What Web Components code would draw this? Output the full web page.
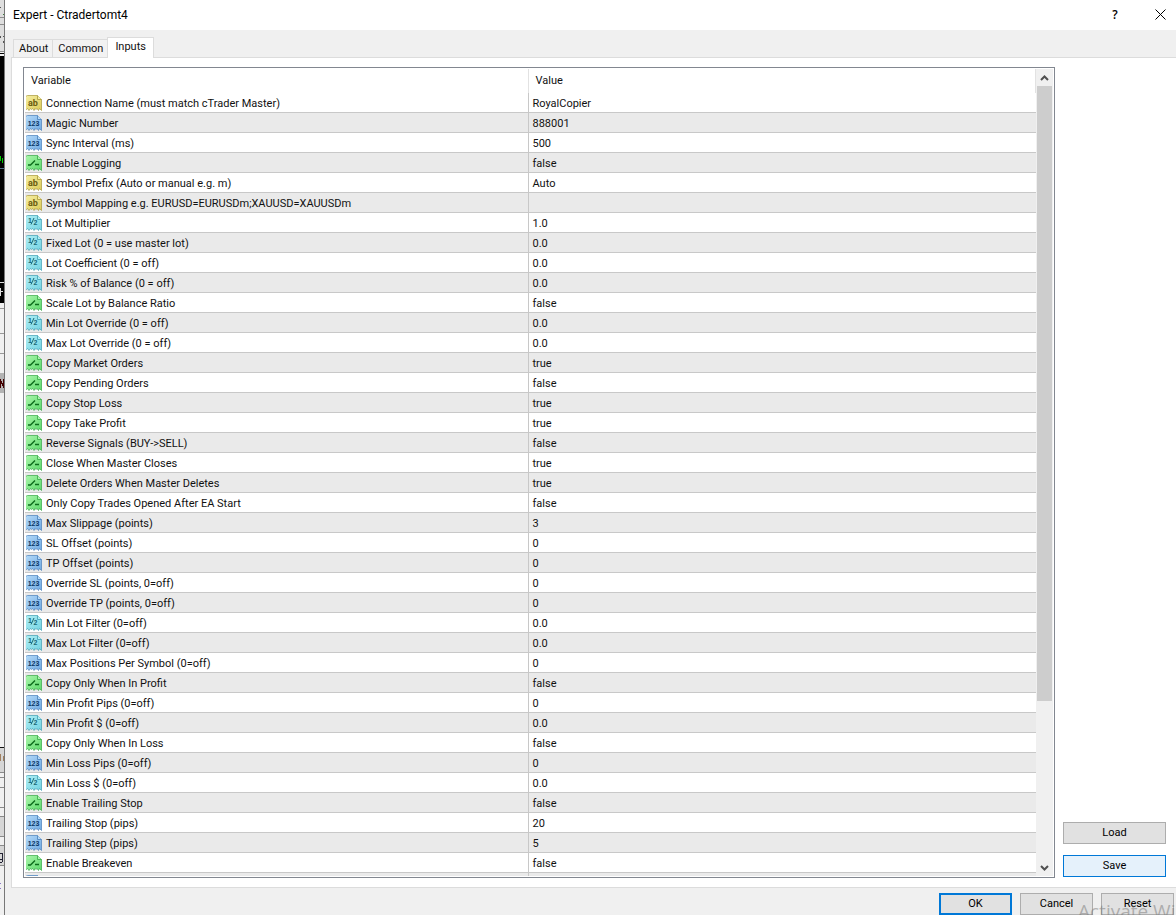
<!DOCTYPE html>
<html lang="en">
<head>
<meta charset="utf-8">
<title>Expert - Ctradertomt4</title>
<style>
body {
  margin: 0;
  height: 100vh;
  overflow: hidden;
  display: flex;
  background: #f0f0f0;
  color: #111;
  font: 11px/20px Roboto, "Liberation Sans", sans-serif;
}
</style>
</head>
<body>
<desktop-edge></desktop-edge>
<expert-dialog heading="Expert - Ctradertomt4">
  <dialog-tab slot="tabs">About</dialog-tab>
  <dialog-tab slot="tabs">Common</dialog-tab>
  <dialog-tab slot="tabs" selected>Inputs</dialog-tab>
  <inputs-list></inputs-list>
  <push-button slot="side">Load</push-button>
  <push-button slot="side" kind="hot">Save</push-button>
  <push-button slot="footer" kind="default">OK</push-button>
  <push-button slot="footer">Cancel</push-button>
  <push-button slot="footer">Reset</push-button>
</expert-dialog>
<activation-note>Activate Wi</activation-note>

<script>
function attach(element, html) {
  const template = document.createElement("template");
  template.innerHTML = html;
  element.attachShadow({ mode: "open" }).appendChild(template.content.cloneNode(true));
}

// The sliver of the terminal window left of the dialog
class DesktopEdge extends HTMLElement {
  connectedCallback() {
    attach(this, `
<style>
:host {
  flex: none;
  width: 4px;
  overflow: hidden;
  background: #f0f0f0;
  border-right: 1px solid #777;
}
svg { display: block; }
</style>
<svg width="4" height="915" aria-hidden="true">
  <path fill="#dedede" d="M0 0h4v52H0z"/>
  <path fill="#8d8d8d" d="M0 17h4v1H0zM0 24h4v1H0zM0 51h4v1H0z"/>
  <path fill="#555" d="M0 7h1v1H0zM0 36h1v2H0zM3 36h1v1H3zM3 41h1v2H3z"/>
  <path fill="#3c7a3c" d="M3 14h1v1H3z"/>
  <path fill="#000" d="M0 53h4v1H0zM0 56h4v247H0z"/>
  <path fill="#0c0" d="M0 156h1v5H0zM2 158h1v5H2z"/>
  <path fill="#51708a" d="M0 168h4v1H0z"/>
  <path fill="#ddd" d="M0 282h4v1H0zM0 288h1v8H0zM0 291h3v1H0z"/>
  <path fill="#999" d="M0 308h4v1H0zM0 333h4v1H0zM0 353h4v1H0z"/>
  <path fill="#b4b4b4" d="M0 373h4v20H0z"/>
  <path fill="#400" d="M0 379h1v9H0zM1 381h1v3H1zM2 383h1v3H2zM3 379h1v9H3z"/>
  <path fill="#111" d="M0 747h4v1H0z"/>
  <path fill="#d6d6d6" d="M0 748h4v24H0zM0 816h4v21H0zM0 845h4v20H0z"/>
  <path fill="#a08060" d="M0 754h1v7H0zM3 756h1v5H3z"/>
  <path fill="#8a8a8a" d="M0 772h4v1H0zM0 777h4v1H0zM0 787h4v1H0zM0 807h4v1H0zM0 816h4v1H0zM0 836h4v1H0zM0 845h4v1H0zM0 865h4v1H0z"/>
  <path fill="#223" d="M2 853h1v9H2zM0 853h2v1H0zM0 859h2v1H0zM0 862h2v1H0z"/>
  <path fill="#8a78c8" d="M0 883h1v1H0zM0 888h1v1H0z"/>
</svg>`);
  }
}
customElements.define("desktop-edge", DesktopEdge);

class ExpertDialog extends HTMLElement {
  connectedCallback() {
    attach(this, `
<style>
:host {
  flex: 1;
  min-width: 0;
  display: flex;
  flex-direction: column;
}
header {
  display: flex;
  align-items: center;
  height: 29px;
  padding: 0 8px 1px;
  background: #fff;
}
h1 {
  flex: 1;
  margin: 0;
  font: 12px/20px Roboto, "Open Sans", sans-serif;
  color: #000;
}
header button {
  display: grid;
  place-items: center;
  width: 16px;
  height: 20px;
  margin-left: 29px;
  padding: 0;
  border: 0;
  background: none;
  font: 600 12px/20px "Open Sans", sans-serif;
  color: #000;
}
nav {
  display: flex;
  align-items: flex-end;
  height: 28px;
  padding-left: 8px;
}
main {
  flex: 1;
  min-height: 0;
  display: flex;
  gap: 8px;
  margin-left: 6px;
  margin-top: -1px;
  padding: 9px 10px 9px 11px;
  border: 1px solid #dcdcdc;
  border-right: 0;
  background: #fff;
}
aside {
  display: flex;
  flex-direction: column;
  justify-content: flex-end;
  gap: 11px;
  width: 103px;
  padding-bottom: 1px;
}
footer {
  display: flex;
  justify-content: flex-end;
  gap: 8px;
  padding: 5px 2px 0 0;
}
footer ::slotted(*) { width: 73px; }
</style>
<header>
  <h1></h1>
  <button aria-label="Help">?</button>
  <button aria-label="Close">
    <svg width="11" height="11" viewBox="0 0 11 11"><path d="M.5.5l10 10M10.5.5l-10 10" stroke="#000"/></svg>
  </button>
</header>
<nav><slot name="tabs"></slot></nav>
<main>
  <slot></slot>
  <aside><slot name="side"></slot></aside>
</main>
<footer><slot name="footer"></slot></footer>`);
    this.shadowRoot.querySelector("h1").textContent = this.getAttribute("heading");
  }
}
customElements.define("expert-dialog", ExpertDialog);

class DialogTab extends HTMLElement {
  connectedCallback() {
    attach(this, `
<style>
:host { display: block; }
button {
  display: block;
  height: 19px;
  padding: 0 4px 0 5px;
  border: 1px solid #dcdcdc;
  border-right: 0;
  background: #f2f2f2;
  font: inherit;
  line-height: 18px;
  color: inherit;
}
:host([selected]) { position: relative; }
:host([selected]) button {
  height: 21px;
  padding: 0 7px 2px;
  border-right: 1px solid #dcdcdc;
  border-bottom: 0;
  background: #fff;
}
</style>
<button role="tab"><slot></slot></button>`);
  }
}
customElements.define("dialog-tab", DialogTab);

class PushButton extends HTMLElement {
  connectedCallback() {
    attach(this, `
<style>
:host { display: block; }
button {
  display: block;
  width: 100%;
  height: 22px;
  padding: 0;
  border: 1px solid #adadad;
  background: #e1e1e1;
  font: inherit;
  color: #000;
}
:host([kind="default"]) button {
  border: 2px solid #0078d7;
  line-height: 18px;
}
:host([kind="hot"]) button { border-color: #0078d7; background: #e5f1fb; }
</style>
<button><slot></slot></button>`);
  }
}
customElements.define("push-button", PushButton);

// Little torn-paper badge that tells the type of an input
const badges = {
  string: {
    light: "#f6efa4", dark: "#dccb58", edge: "#a8983c", ink: "#6a5c10",
    mark: `<text class="ab" x="7" y="11" text-anchor="middle">ab</text>`
  },
  int: {
    light: "#b4daf9", dark: "#70aae2", edge: "#4a80ba", ink: "#0c3765",
    mark: `<text class="num" x="7.5" y="11" text-anchor="middle">123</text>`
  },
  double: {
    light: "#b0f0f5", dark: "#74d2e2", edge: "#429fb4", ink: "#176878",
    mark: `<text class="half" x="2" y="8">1</text><path d="M5 9.500L8 3" stroke="#176878"/><text class="half" x="7.5" y="10">2</text>`
  },
  bool: {
    light: "#acf6ac", dark: "#5cda6c", edge: "#38a848", ink: "#0c5c1c",
    mark: `<path d="M2 10h2.500l4.500-4.500M9 9.500h4" fill="none" stroke="#0c6c1c" stroke-width="1.400"/>`
  }
};

class TypeIcon extends HTMLElement {
  connectedCallback() {
    const b = badges[this.getAttribute("type")];
    attach(this, `
<style>
:host { display: block; width: 16px; height: 16px; }
svg { display: block; }
text { fill: ${b.ink}; }
.ab { font: bold 9px Roboto, sans-serif; }
.num, .half { font: bold 7px "Liberation Sans", sans-serif; }
</style>
<svg width="16" height="16" viewBox="0 0 16 16" aria-hidden="true">
  <defs>
    <linearGradient id="g" x2="1" y2="1">
      <stop stop-color="${b.light}"/>
      <stop offset="1" stop-color="${b.dark}"/>
    </linearGradient>
  </defs>
  <path d="M1.500.5h10l4 4v11l-2-2-1 2-1.500-2-1 1-1-1-1 2-1.500-2-1 1-1-1-1.500 2-1.500-2-1 1-1-1v-12z" fill="url(#g)" stroke="${b.edge}" stroke-opacity=".7"/>
  <path d="M11.500.5v4h4" fill="${b.light}" stroke="${b.edge}" stroke-opacity=".8"/>
  ${this.hasAttribute("blank") ? "" : b.mark}
</svg>`);
  }
}
customElements.define("type-icon", TypeIcon);

const inputs = [
  ["string", "Connection Name (must match cTrader Master)", "RoyalCopier"],
  ["int", "Magic Number", "888001"],
  ["int", "Sync Interval (ms)", "500"],
  ["bool", "Enable Logging", "false"],
  ["string", "Symbol Prefix (Auto or manual e.g. m)", "Auto"],
  ["string", "Symbol Mapping e.g. EURUSD=EURUSDm;XAUUSD=XAUUSDm", ""],
  ["double", "Lot Multiplier", "1.0"],
  ["double", "Fixed Lot (0 = use master lot)", "0.0"],
  ["double", "Lot Coefficient (0 = off)", "0.0"],
  ["double", "Risk % of Balance (0 = off)", "0.0"],
  ["bool", "Scale Lot by Balance Ratio", "false"],
  ["double", "Min Lot Override (0 = off)", "0.0"],
  ["double", "Max Lot Override (0 = off)", "0.0"],
  ["bool", "Copy Market Orders", "true"],
  ["bool", "Copy Pending Orders", "false"],
  ["bool", "Copy Stop Loss", "true"],
  ["bool", "Copy Take Profit", "true"],
  ["bool", "Reverse Signals (BUY->SELL)", "false"],
  ["bool", "Close When Master Closes", "true"],
  ["bool", "Delete Orders When Master Deletes", "true"],
  ["bool", "Only Copy Trades Opened After EA Start", "false"],
  ["int", "Max Slippage (points)", "3"],
  ["int", "SL Offset (points)", "0"],
  ["int", "TP Offset (points)", "0"],
  ["int", "Override SL (points, 0=off)", "0"],
  ["int", "Override TP (points, 0=off)", "0"],
  ["double", "Min Lot Filter (0=off)", "0.0"],
  ["double", "Max Lot Filter (0=off)", "0.0"],
  ["int", "Max Positions Per Symbol (0=off)", "0"],
  ["bool", "Copy Only When In Profit", "false"],
  ["int", "Min Profit Pips (0=off)", "0"],
  ["double", "Min Profit $ (0=off)", "0.0"],
  ["bool", "Copy Only When In Loss", "false"],
  ["int", "Min Loss Pips (0=off)", "0"],
  ["double", "Min Loss $ (0=off)", "0.0"],
  ["bool", "Enable Trailing Stop", "false"],
  ["int", "Trailing Stop (pips)", "20"],
  ["int", "Trailing Step (pips)", "5"],
  ["bool", "Enable Breakeven", "false"],
  ["int", "", ""]
];

class InputsList extends HTMLElement {
  connectedCallback() {
    attach(this, `
<style>
:host {
  flex: 1;
  min-width: 0;
  display: flex;
  padding: 1px;
  border: 1px solid #828790;
}
.view {
  flex: 1;
  min-width: 0;
  overflow: hidden;
}
table {
  width: 100%;
  table-layout: fixed;
  border-collapse: separate;
  border-spacing: 0;
}
th, td {
  box-sizing: border-box;
  padding: 0 3px;
  text-align: left;
  font-weight: normal;
  white-space: nowrap;
}
th {
  height: 24px;
  padding: 0 6px;
  border-right: 1px solid #e2e2e2;
}
th:first-child { width: 49.9%; }
td {
  height: 20px;
  padding-top: 2px;
  line-height: 17px;
  border-bottom: 1px solid #c8c8c8;
}
td:first-child {
  padding: 0 1px;
  border-right: 1px solid #c8c8c8;
}
tbody tr:nth-child(even) { background: #eaeaea; }
.name {
  display: flex;
  align-items: center;
  gap: 4px;
  height: 19px;
}
.name span { padding-top: 2px; }
</style>
<div class="view">
  <table>
    <thead><tr><th>Variable</th><th>Value</th></tr></thead>
    <tbody></tbody>
  </table>
</div>
<list-scrollbar></list-scrollbar>`);

    const body = this.shadowRoot.querySelector("tbody");
    inputs.forEach(([type, name, value]) => {
      const row = body.insertRow();
      const first = row.insertCell();
      first.innerHTML = `<div class="name"><type-icon type="${type}" ${name ? "" : "blank"}></type-icon><span></span></div>`;
      first.querySelector("span").textContent = name;
      row.insertCell().textContent = value;
    });
  }
}
customElements.define("inputs-list", InputsList);

class ListScrollbar extends HTMLElement {
  connectedCallback() {
    attach(this, `
<style>
:host {
  display: flex;
  flex-direction: column;
  width: 17px;
  background: #f0f0f0;
}
button {
  display: grid;
  place-items: center;
  height: 17px;
  padding: 0;
  border: 0;
  background: none;
}
.track { flex: 1; }
.thumb {
  height: 79.5%;
  margin: 0 1px;
  background: #cdcdcd;
}
path { fill: none; stroke: #505050; stroke-width: 2; }
</style>
<button aria-label="Scroll up"><svg width="9" height="6"><path d="M1 5l3.500-3.500L8 5"/></svg></button>
<div class="track"><div class="thumb"></div></div>
<button aria-label="Scroll down"><svg width="9" height="6"><path d="M1 1l3.500 3.500L8 1"/></svg></button>`);
  }
}
customElements.define("list-scrollbar", ListScrollbar);

// Watermark that the system lays over everything
class ActivationNote extends HTMLElement {
  connectedCallback() {
    attach(this, `
<style>
:host {
  position: absolute;
  right: 0;
  bottom: -10px;
  width: 98px;
  overflow: hidden;
  white-space: nowrap;
  pointer-events: none;
  font: 19px/28px "Open Sans", "Noto Sans", sans-serif;
  color: rgba(120, 120, 120, .5);
}
</style>
<slot></slot>`);
  }
}
customElements.define("activation-note", ActivationNote);
</script>
</body>
</html>
